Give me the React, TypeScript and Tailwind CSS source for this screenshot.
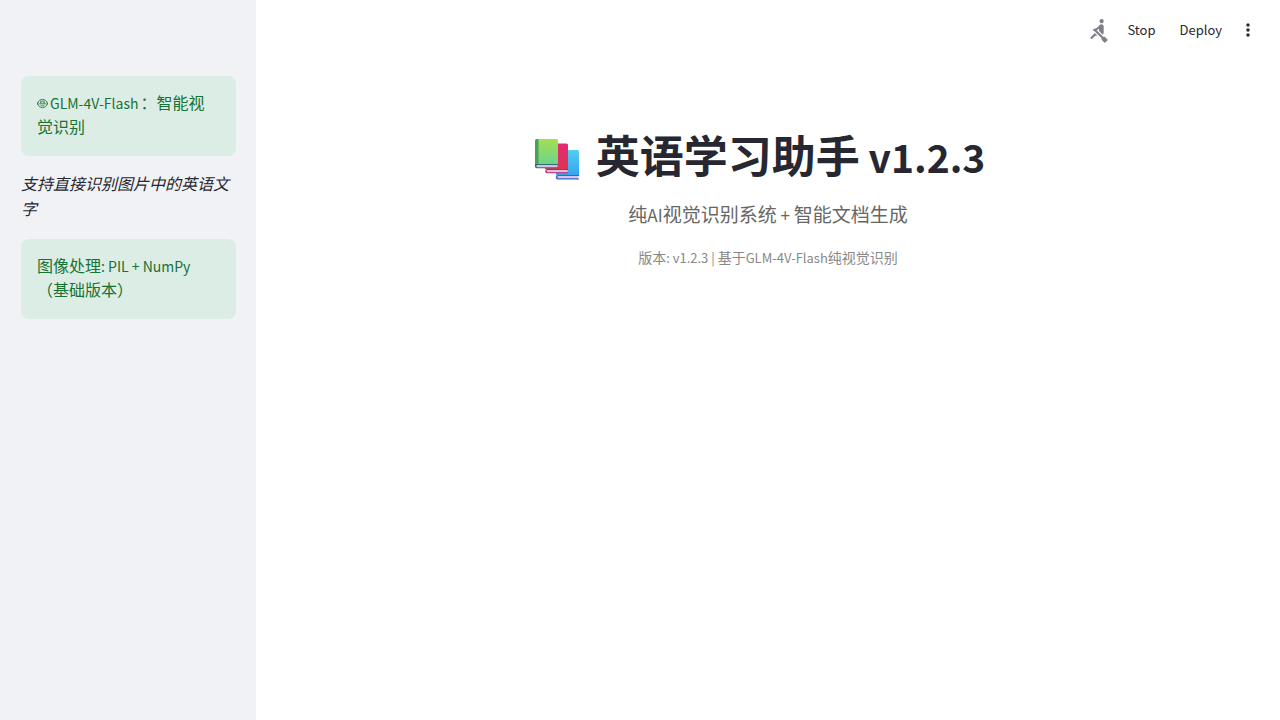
import type { ReactNode } from "react";
import { MdMoreVert, MdRowing } from "react-icons/md";

function Books() {
  return (
    <svg className="mt-2.5 h-[41px] w-[44px] shrink-0" viewBox="0 0 44 41" role="img" aria-label="书籍">
      <defs>
        <linearGradient id="green" x1="0" y1="0" x2="0" y2="1">
          <stop offset="0" stopColor="#a5df50" />
          <stop offset="1" stopColor="#6dd38f" />
        </linearGradient>
        <linearGradient id="red" x1="0" y1="0" x2="0" y2="1">
          <stop offset="0" stopColor="#e22b72" />
          <stop offset="1" stopColor="#dd3552" />
        </linearGradient>
        <linearGradient id="blue" x1="0" y1="0" x2="0" y2="1">
          <stop offset="0" stopColor="#55cdf5" />
          <stop offset="1" stopColor="#35a5ee" />
        </linearGradient>
      </defs>
      <path d="M21 13a2 2 0 0 1 2-2h19.500a1.500 1.500 0 0 1 1.500 1.500v23.500H21z" fill="url(#blue)" />
      <path d="M44 36H23a2.200 2.200 0 0 0 0 4.400h21v-1H43v-2.400h1z" fill="#3267c4" />
      <path d="M23.500 37H43.500v2.300h-20a1.100 1.100 0 0 1 0-2.300z" fill="#d7c3ec" />
      <path d="M10 6.500a2 2 0 0 1 2-2h19.500A1.500 1.500 0 0 1 33 6v24H10z" fill="url(#red)" />
      <path d="M33 30H12.300a2.100 2.100 0 0 0 0 4.300H33v-1h-1v-2.200h1z" fill="#b62567" />
      <path d="M12.500 31H32.500v2.200h-20a1.100 1.100 0 0 1 0-2.200z" fill="#e1bce6" />
      <path d="M0 2a2 2 0 0 1 2-2h19.500A1.500 1.500 0 0 1 23 1.500V25H0z" fill="url(#green)" />
      <path d="M0 2a2 2 0 0 1 2-2h1.500v25H0z" fill="#46a259" />
      <path d="M0 25h23v1h-1v2.300h1v1H2.200A2.200 2.200 0 0 1 0 27z" fill="#2e7067" />
      <path d="M2.500 26H22.500v2.300h-20a1.100 1.100 0 0 1 0-2.300z" fill="#d4c1e5" />
    </svg>
  );
}

function Robot() {
  return (
    <svg
      className="mr-0.5 inline-block h-[11px] w-[11px] align-baseline"
      viewBox="0 0 11 11"
      fill="none"
      stroke="currentColor"
      aria-hidden="true"
    >
      <ellipse cx="5.500" cy="5.500" rx="4.600" ry="4.200" strokeWidth="0.8" />
      <path d="M0.400 4.300v2.400M10.600 4.300v2.400M3 3.200h5M2.200 5.800h6.600M3.500 7.800h4" strokeWidth="0.8" />
      <circle cx="3.900" cy="4.800" r="0.700" fill="currentColor" stroke="none" />
      <circle cx="7.100" cy="4.800" r="0.700" fill="currentColor" stroke="none" />
    </svg>
  );
}

function Alert({ children }: { children: ReactNode }) {
  return (
    <div role="alert" className="rounded-lg bg-[#dcede6] px-4 pt-3.5 pb-[18px] text-[16px] leading-6 text-[#177233]">
      {children}
    </div>
  );
}

export default function App() {
  return (
    <div className="flex min-h-screen bg-white font-['Noto_Sans_CJK_SC',sans-serif] text-[#262730]">
      <aside className="flex w-64 shrink-0 flex-col bg-[#f0f2f6] pt-[76px] pr-5 pl-[21px]">
        <Alert>
          <Robot />
          <span className="mr-0.5 text-[14px] leading-none">GLM-4V-Flash</span>：智能视
          <br />
          觉识别
        </Alert>
        <p className="pt-[15px] pb-[18px] text-[16px] leading-[25px] italic">支持直接识别图片中的英语文字</p>
        <Alert>
          图像处理<span className="text-[14px] leading-none">: PIL + NumPy</span>
          <br />（基础版本）
        </Alert>
      </aside>
      <div className="min-w-0 flex-1">
        <header className="flex h-[60px] items-center justify-end pr-[22px] text-[13px]">
          <MdRowing className="mr-4 size-[25px] text-[#808088]" aria-hidden="true" />
          <button type="button" className="mr-6">Stop</button>
          <button type="button" className="mr-4">Deploy</button>
          <button type="button" aria-label="菜单">
            <MdMoreVert className="size-5" />
          </button>
        </header>
        <main className="flex flex-col items-center pt-16 text-center">
          <h1 className="flex items-center gap-[17px] pr-4 text-[44px] leading-[60px] font-bold">
            <Books />
            <span>
              英语学习助手<span className="text-[39px] leading-none"> v1.2.3</span>
            </span>
          </h1>
          <p className="mt-[15px] text-[19px] leading-[30px] text-[#666666]">
            纯<span className="text-[17px] leading-none">AI</span>视觉识别系统
            <span className="text-[17px] leading-none"> + </span>智能文档生成
          </p>
          <p className="mt-4 text-[14px] leading-6 text-[#888888]">
            版本<span className="text-[13px] leading-none">: v1.2.3 | </span>基于
            <span className="text-[13px] leading-none">GLM-4V-Flash</span>纯视觉识别
          </p>
        </main>
      </div>
    </div>
  );
}
